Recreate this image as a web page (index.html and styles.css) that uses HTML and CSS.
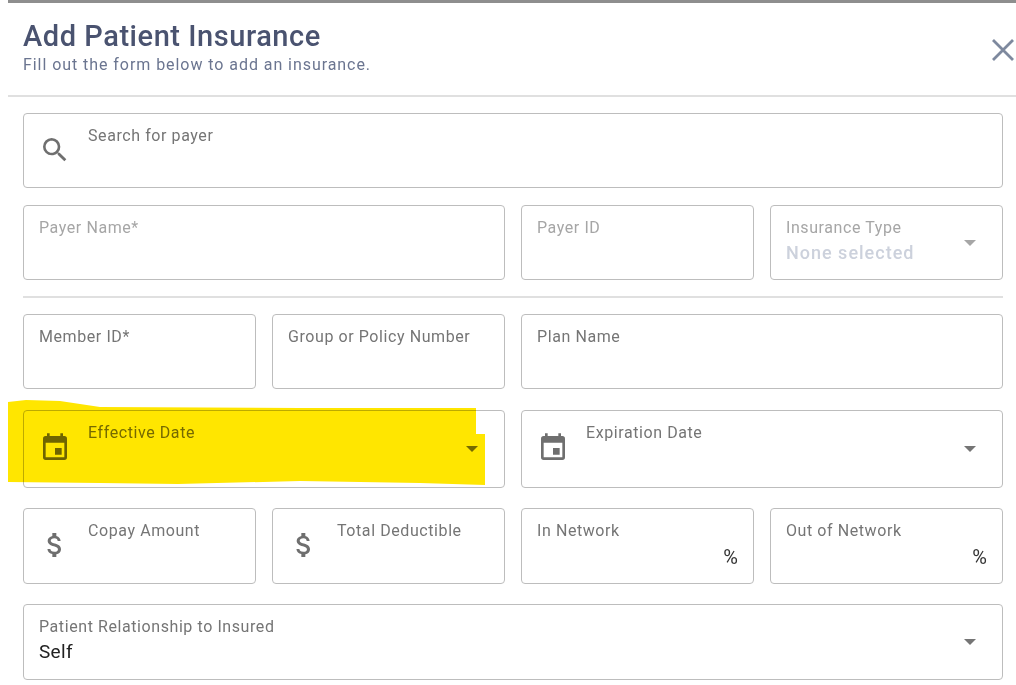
FILE: index.html
```html
<!DOCTYPE html>
<html lang="en">
<head>
<meta charset="utf-8">
<title>Add Patient Insurance</title>
<link rel="stylesheet" href="styles.css">
</head>
<body>
<div class="topbar"></div>
<main class="modal">
  <header class="head">
    <div>
      <h1>Add Patient Insurance</h1>
      <p>Fill out the form below to add an insurance.</p>
    </div>
    <svg class="close" viewBox="0 0 24 24"><path d="M2 2 22 22M22 2 2 22"/></svg>
  </header>
  <form class="form">
    <div class="row r-search">
      <div class="field icon-field s4">
        <svg class="ico" viewBox="0 0 24 24"><path d="M15.5 14h-.79l-.28-.27A6.47 6.47 0 0 0 16 9.5 6.5 6.5 0 1 0 9.5 16c1.61 0 3.09-.59 4.23-1.57l.27.28v.79l5 4.99L20.49 19l-4.99-5zm-6 0C7.01 14 5 11.99 5 9.5S7.01 5 9.5 5 14 7.01 14 9.5 11.99 14 9.5 14z"/></svg>
        <label>Search for payer</label>
      </div>
    </div>
    <div class="row r-payer">
      <div class="field s2 muted"><label>Payer Name*</label></div>
      <div class="field muted"><label>Payer ID</label></div>
      <div class="field select muted">
        <label>Insurance Type</label>
        <span class="value faded">None selected</span>
        <i class="caret"></i>
      </div>
    </div>
    <hr class="rule">
    <div class="row r-member">
      <div class="field"><label>Member ID*</label></div>
      <div class="field"><label>Group or Policy Number</label></div>
      <div class="field s2"><label>Plan Name</label></div>
    </div>
    <div class="row r-date">
      <div class="field icon-field select s2">
        <svg class="ico" viewBox="0 0 24 24"><path d="M17 12h-5v5h5v-5zM16 1v2H8V1H6v2H5a2 2 0 0 0-1.99 2L3 19a2 2 0 0 0 2 2h14a2 2 0 0 0 2-2V5a2 2 0 0 0-2-2h-1V1h-2zm3 18H5V8h14v11z"/></svg>
        <label>Effective Date</label>
        <i class="caret"></i>
      </div>
      <div class="field icon-field select s2">
        <svg class="ico" viewBox="0 0 24 24"><path d="M17 12h-5v5h5v-5zM16 1v2H8V1H6v2H5a2 2 0 0 0-1.99 2L3 19a2 2 0 0 0 2 2h14a2 2 0 0 0 2-2V5a2 2 0 0 0-2-2h-1V1h-2zm3 18H5V8h14v11z"/></svg>
        <label>Expiration Date</label>
        <i class="caret"></i>
      </div>
    </div>
    <div class="row r-money">
      <div class="field icon-field">
        <svg class="ico" viewBox="0 0 24 24"><path d="M11.8 10.9c-2.27-.59-3-1.2-3-2.15 0-1.09 1.01-1.85 2.7-1.85 1.78 0 2.44.85 2.5 2.1h2.21c-.07-1.72-1.12-3.3-3.21-3.81V3h-3v2.16c-1.94.42-3.5 1.68-3.5 3.61 0 2.31 1.91 3.46 4.7 4.13 2.5.6 3 1.48 3 2.41 0 .69-.49 1.79-2.7 1.79-2.06 0-2.87-.92-2.98-2.1h-2.2c.12 2.19 1.76 3.42 3.68 3.83V21h3v-2.15c1.95-.37 3.5-1.5 3.5-3.55 0-2.84-2.43-3.81-4.7-4.4z"/></svg>
        <label>Copay Amount</label>
      </div>
      <div class="field icon-field">
        <svg class="ico" viewBox="0 0 24 24"><path d="M11.8 10.9c-2.27-.59-3-1.2-3-2.15 0-1.09 1.01-1.85 2.7-1.85 1.78 0 2.44.85 2.5 2.1h2.21c-.07-1.72-1.12-3.3-3.21-3.81V3h-3v2.16c-1.94.42-3.5 1.68-3.5 3.61 0 2.31 1.91 3.46 4.7 4.13 2.5.6 3 1.48 3 2.41 0 .69-.49 1.79-2.7 1.79-2.06 0-2.87-.92-2.98-2.1h-2.2c.12 2.19 1.76 3.42 3.68 3.83V21h3v-2.15c1.95-.37 3.5-1.5 3.5-3.55 0-2.84-2.43-3.81-4.7-4.4z"/></svg>
        <label>Total Deductible</label>
      </div>
      <div class="field"><label>In Network</label><span class="pct">%</span></div>
      <div class="field"><label>Out of Network</label><span class="pct">%</span></div>
    </div>
    <div class="row r-rel">
      <div class="field select s4">
        <label>Patient Relationship to Insured</label>
        <span class="value">Self</span>
        <i class="caret"></i>
      </div>
    </div>
  </form>
</main>
<svg class="marker" viewBox="0 0 1016 685" aria-hidden="true"><path d="M8 402 26 400 60 401 100 407 300 408 476 408 476 434 485 434 485 485 420 483 300 481 178 484 100 483 8 482Z"/></svg>
</body>
</html>
```
FILE: styles.css
```css
* { box-sizing: border-box; }
html, body { margin: 0; height: 685px; overflow: hidden; background: #fff; }
body { font-family: Roboto, "Liberation Sans", sans-serif; position: relative; }
.topbar { height: 3px; margin-left: 8px; background: #8e8e8e; }
.modal { padding-left: 8px; }
.head {
  height: 94px;
  padding: 16px 0 0 15px;
  border-bottom: 2px solid #e0e0e0;
  display: flex;
  justify-content: space-between;
  align-items: flex-start;
}
h1 { margin: 0; font-size: 29px; line-height: 34px; font-weight: 500; color: #4a5370; letter-spacing: .55px; }
.head p { margin: 2px 0 0; font-size: 16px; line-height: 19px; color: #6b7590; letter-spacing: .94px; }
.close { width: 24px; height: 24px; margin: 19px 1px 0 0; fill: none; stroke: #7e899e; stroke-width: 2.8; }
.form { padding: 16px 13px 0 15px; }
.row { display: grid; grid-template-columns: repeat(4, 233px); column-gap: 16px; height: 75px; }
.r-date { height: 78px; margin-top: 21px; }
.r-money { height: 76px; margin-top: 20px; }
.r-rel { height: 76px; margin-top: 20px; }
.r-payer { margin-top: 17px; }
.rule { border: 0; height: 2px; background: #e0e0e0; margin: 16px 0 16px; }
.s2 { grid-column: span 2; }
.s4 { grid-column: span 4; }
.field {
  position: relative;
  border: 1px solid #bdbdbd;
  border-radius: 4px;
  padding: 11px 15px 0;
  background: #fff;
}
.field.icon-field { padding-left: 64px; }
.field label { display: block; font-size: 16px; line-height: 21px; color: #757575; letter-spacing: .58px; }
.muted label { color: #a6a6a6; }
.value { display: block; font-size: 19px; line-height: 24px; margin-top: 3px; color: #212121; letter-spacing: .3px; }
.value.faded { font-size: 18px; color: #ccd1dc; font-weight: 500; letter-spacing: 1px; }
.ico { position: absolute; left: 15px; top: 50%; width: 32px; height: 32px; margin-top: -17px; fill: #6f6f6f; }
.caret { position: absolute; right: 26px; top: 50%; margin-top: -3px; border: 6px solid transparent; border-bottom: 0; border-top-color: #757575; }
.muted .caret { border-top-color: #a6a6a6; }
.pct { position: absolute; right: 15px; top: 37px; font-size: 20px; line-height: 22px; color: #333; }
.marker { position: absolute; left: 0; top: 0; width: 1016px; height: 685px; fill: #ffe600; mix-blend-mode: multiply; pointer-events: none; }
```
